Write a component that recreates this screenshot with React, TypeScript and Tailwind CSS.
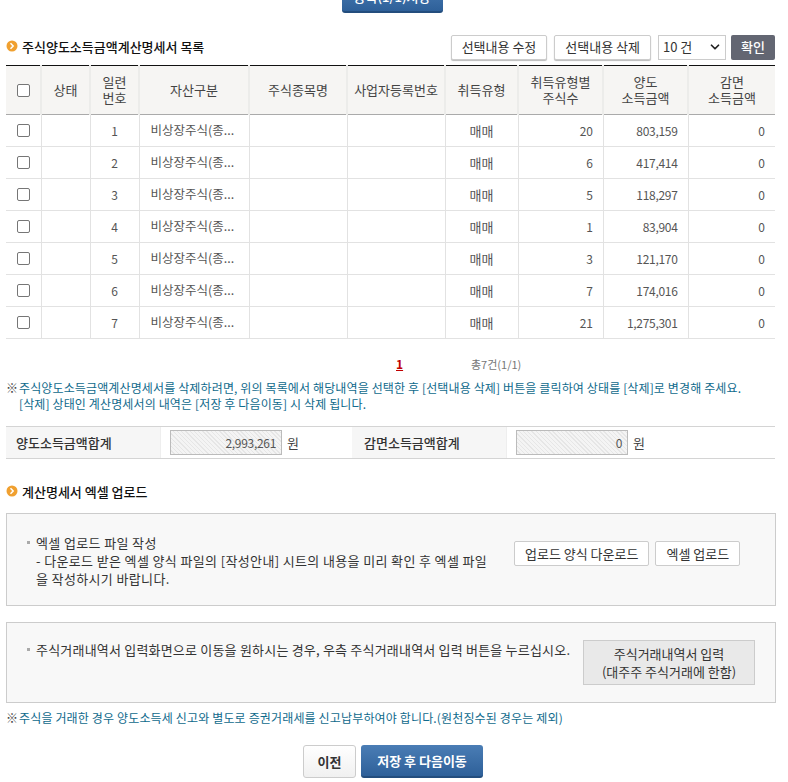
import { ChevronDown } from "lucide-react";

const font = "font-['Noto_Sans_CJK_KR','Liberation_Sans',sans-serif]";

const rows = [
  { no: 1, qty: "20", amount: "803,159" },
  { no: 2, qty: "6", amount: "417,414" },
  { no: 3, qty: "5", amount: "118,297" },
  { no: 4, qty: "1", amount: "83,904" },
  { no: 5, qty: "3", amount: "121,170" },
  { no: 6, qty: "7", amount: "174,016" },
  { no: 7, qty: "21", amount: "1,275,301" },
];

const Bullet = () => (
  <svg width="12" height="12" viewBox="0 0 12 12" className="shrink-0 -mt-[3px]">
    <circle cx="6" cy="6" r="5.5" fill="#f0a030" />
    <path d="M4.5 3.2 7.2 6 4.5 8.8" fill="none" stroke="#fff" strokeWidth="1.5" />
  </svg>
);

const SectionTitle = ({ text }: { text: string }) => (
  <div className="flex items-center gap-[4px]">
    <Bullet />
    <h2 className="text-[13px] font-medium text-[#111] leading-[20px]">{text}</h2>
  </div>
);

const Check = () => (
  <span className="block mx-auto w-[13px] h-[13px] bg-white border border-[#767676] rounded-[2px]" />
);

const Th = ({ children }: { children?: React.ReactNode }) => (
  <th className="border-r-2 border-[#ececea] last:border-r-0 font-normal text-[13px] leading-[16px] text-[#444] text-center align-middle">
    {children}
  </th>
);

const Td = ({ children, className = "" }: { children?: React.ReactNode; className?: string }) => (
  <td className={`border-r border-[#e2e2e2] last:border-r-0 text-[#555] ${className}`}>
    {children}
  </td>
);

const ReadonlyAmount = ({ value }: { value: string }) => (
  <div className="flex items-center gap-[5px]">
    <div className="w-[112px] h-[25px] border border-[#bbb] text-right pr-[5px] text-[12px] tracking-[-0.3px] leading-[23px] text-[#555] bg-[repeating-linear-gradient(45deg,#f4f4f4,#f4f4f4_2px,#e6e6e6_2px,#e6e6e6_3px)]">
      {value}
    </div>
    <span className="text-[13px] text-[#444]">원</span>
  </div>
);

const GrayButton = ({ children }: { children: React.ReactNode }) => (
  <button className="h-[25px] px-[10px] bg-white border border-[#ccc] rounded-[2px] shadow-[0_1px_1px_#bbb] text-[13px] text-[#333]">
    {children}
  </button>
);

const FlatButton = ({ children }: { children: React.ReactNode }) => (
  <button className="h-[25px] px-[10px] bg-white border border-[#ccc] rounded-[2px] text-[13px] text-[#333]">
    {children}
  </button>
);

export default function App() {
  return (
    <div className={`${font} w-[788px] h-[782px] overflow-hidden bg-white relative`}>
      <div className="flex justify-center h-[13px] items-end pr-[4px]">
        <button className="shrink-0 w-[101px] h-[30px] rounded-[3px] bg-[linear-gradient(#4a7db5,#2e6099)] border-b-2 border-[#234d7d] text-white text-[13px] font-medium">
          등록(1/1)저장
        </button>
      </div>

      <div className="pl-[6px] pr-[13px]">
        <div className="flex items-center justify-between h-[26px] mt-[21px] mb-[5px]">
          <SectionTitle text="주식양도소득금액계산명세서 목록" />
          <div className="flex items-center">
            <GrayButton>선택내용 수정</GrayButton>
            <span className="w-[7px]" />
            <GrayButton>선택내용 삭제</GrayButton>
            <div className="ml-[7px] w-[68px] h-[25px] border border-[#ccc] flex items-center justify-between pl-[4px] pr-[3px] text-[13px] text-[#333]">
              10 건
              <ChevronDown size={14} strokeWidth={3} className="text-[#222]" />
            </div>
            <button className="ml-[5px] w-[44px] h-[25px] bg-[#636672] rounded-[2px] text-white text-[13px] font-medium">
              확인
            </button>
          </div>
        </div>

        <table className="w-[769px] table-fixed border-collapse border-t border-[#111]">
          <colgroup>
            <col className="w-[35px]" />
            <col className="w-[49px]" />
            <col className="w-[49px]" />
            <col className="w-[110px]" />
            <col className="w-[98px]" />
            <col className="w-[98px]" />
            <col className="w-[73px]" />
            <col className="w-[85px]" />
            <col className="w-[85px]" />
            <col className="w-[87px]" />
          </colgroup>
          <thead>
            <tr className="h-[49px] bg-[#f6f5f3] border-b border-[#aaa]">
              <Th><Check /></Th>
              <Th>상태</Th>
              <Th>일련<br />번호</Th>
              <Th>자산구분</Th>
              <Th>주식종목명</Th>
              <Th>사업자등록번호</Th>
              <Th>취득유형</Th>
              <Th>취득유형별<br />주식수</Th>
              <Th>양도<br />소득금액</Th>
              <Th>감면<br />소득금액</Th>
            </tr>
          </thead>
          <tbody>
            {rows.map((r) => (
              <tr key={r.no} className="h-[32px] border-b border-[#e2e2e2]">
                <Td><Check /></Td>
                <Td />
                <Td className="text-center text-[12px]">{r.no}</Td>
                <Td className="pl-[11px] text-[12.5px]">비상장주식(종...</Td>
                <Td />
                <Td />
                <Td className="text-center text-[13px]">매매</Td>
                <Td className="text-right pr-[10px] text-[12px] tracking-[-0.3px]">{r.qty}</Td>
                <Td className="text-right pr-[10px] text-[12px] tracking-[-0.3px]">{r.amount}</Td>
                <Td className="text-right pr-[10px] text-[12px]">0</Td>
              </tr>
            ))}
          </tbody>
        </table>

        <div className="flex h-[18px] mt-[16px] text-[12px] leading-[18px]">
          <span className="ml-[390px] w-[75px] font-bold text-[#c00000] underline">1</span>
          <span className="text-[11px] text-[#777]">총7건(1/1)</span>
        </div>

        <div className="mt-[7px] text-[12px] leading-[16px] text-[#0f6a8c] tracking-[0.13px]">
          <p>
            <span className="inline-block w-[13px] text-[#444]">※</span>
            주식양도소득금액계산명세서를 삭제하려면, 위의 목록에서 해당내역을 선택한 후 [선택내용 삭제] 버튼을 클릭하여 상태를 [삭제]로 변경해 주세요.
          </p>
          <p className="pl-[13px]">[삭제] 상태인 계산명세서의 내역은 [저장 후 다음이동] 시 삭제 됩니다.</p>
        </div>

        <div className="mt-[14px] w-[769px] h-[33px] flex items-center border-y border-[#d4d4d4] text-[13px] font-medium text-[#333]">
          <div className="w-[154px] h-full bg-[#f6f6f6] pl-[10px] leading-[31px]">양도소득금액합계</div>
          <div className="w-[192px] h-full pl-[9px] border-l border-[#eee] flex items-center font-normal">
            <ReadonlyAmount value="2,993,261" />
          </div>
          <div className="w-[154px] h-full bg-[#f6f6f6] pl-[12px] leading-[31px]">감면소득금액합계</div>
          <div className="flex-1 h-full pl-[9px] border-l border-[#eee] flex items-center font-normal">
            <ReadonlyAmount value="0" />
          </div>
        </div>

        <div className="mt-[23px]">
          <SectionTitle text="계산명세서 엑셀 업로드" />
        </div>

        <div className="mt-[11px] h-[93px] w-[770px] border border-[#ccc] bg-[#f8f8f8] flex items-center pl-[20px]">
          <div className="w-[467px] mt-[3px] text-[13px] leading-[18px] text-[#333] tracking-[0.36px] pl-[9px] relative">
            <span className="absolute left-0 top-[7px] w-[3px] h-[3px] bg-[#aaa]" />
            엑셀 업로드 파일 작성
            <br />
            - 다운로드 받은 엑셀 양식 파일의 [작성안내] 시트의 내용을 미리 확인 후 엑셀 파일을 작성하시기 바랍니다.
          </div>
          <div className="flex gap-[6px] ml-[20px] mb-[12px]">
            <FlatButton>업로드 양식 다운로드</FlatButton>
            <FlatButton>엑셀 업로드</FlatButton>
          </div>
        </div>

        <div className="mt-[16px] h-[81px] w-[770px] border border-[#ccc] bg-[#f8f8f8] flex items-start pl-[20px] pt-[17px]">
          <p className="relative mt-[1px] pl-[9px] w-[556px] text-[13px] leading-[18px] text-[#333] tracking-[0.2px]">
            <span className="absolute left-0 top-[7px] w-[3px] h-[3px] bg-[#aaa]" />
            주식거래내역서 입력화면으로 이동을 원하시는 경우, 우측 주식거래내역서 입력 버튼을 누르십시오.
          </p>
          <button className="w-[172px] h-[45px] bg-[#e9e9e9] border border-[#ccc] text-[13px] leading-[18px] text-[#333]">
            주식거래내역서 입력
            <br />
            (대주주 주식거래에 한함)
          </button>
        </div>

        <p className="mt-[7px] text-[12px] leading-[16px] text-[#0f6a8c] tracking-[0.15px]">
          <span className="inline-block w-[13px] text-[#444]">※</span>
          주식을 거래한 경우 양도소득세 신고와 별도로 증권거래세를 신고납부하여야 합니다.(원천징수된 경우는 제외)
        </p>

        <div className="mt-[19px] flex justify-center gap-[5px] pl-[5px]">
          <button className="w-[53px] h-[33px] bg-[linear-gradient(#fff,#f0f0f0)] border border-[#ccc] rounded-[3px] text-[13px] font-bold text-[#333]">
            이전
          </button>
          <button className="w-[122px] h-[33px] bg-[linear-gradient(#4a7db5,#2e6099)] border-b-2 border-[#234d7d] rounded-[3px] text-[13px] font-bold text-white">
            저장 후 다음이동
          </button>
        </div>
      </div>
    </div>
  );
}
